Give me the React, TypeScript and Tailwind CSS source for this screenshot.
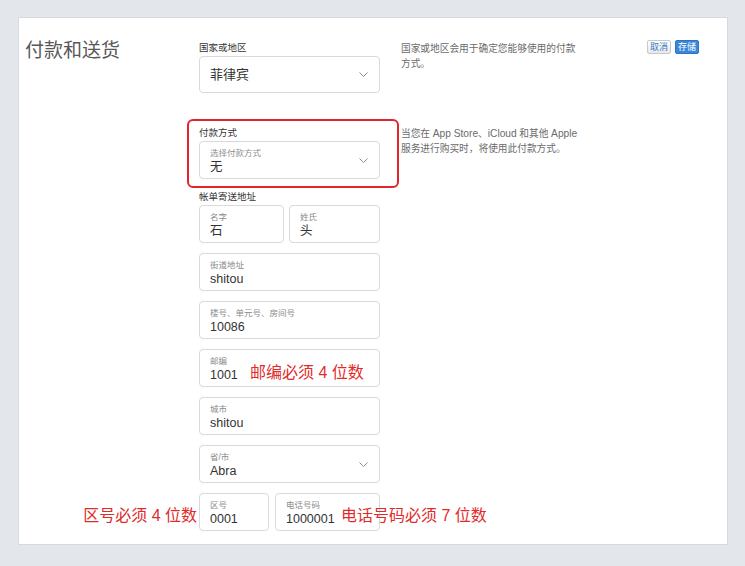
import React from "react";

function Chevron() {
  return (
    <svg width="9" height="5" viewBox="0 0 9 5" className="shrink-0">
      <polyline points="0.5,0.5 4.5,4.5 8.5,0.5" fill="none" stroke="#8a8a8a" strokeWidth="1" />
    </svg>
  );
}

function Field({
  label,
  value,
  className = "",
  select = false,
  children,
}: {
  label: string;
  value: string;
  className?: string;
  select?: boolean;
  children?: React.ReactNode;
}) {
  return (
    <div
      className={`relative h-[38px] rounded-[4px] border border-[#d9d9d9] bg-white pl-[10px] pr-[11px] pt-[6px] flex items-start ${className}`}
    >
      <div className="flex-1 min-w-0">
        <div className="text-[8.5px] leading-[10px] text-[#8c8c8c] whitespace-nowrap">{label}</div>
        <div className="mt-[2px] text-[12.5px] leading-[15px] text-[#333] whitespace-nowrap">{value}</div>
      </div>
      {select && (
        <div className="self-center -mt-[6px]">
          <Chevron />
        </div>
      )}
      {children}
    </div>
  );
}

export default function App() {
  return (
    <div className="h-[566px] w-full bg-[#e3e7eb] pt-[17px] pl-[18px] font-['Liberation_Sans','Noto_Sans_CJK_SC',sans-serif]">
      <div className="relative flex h-[528px] w-[710px] border border-[#d6dade] bg-white">
        {/* Title column */}
        <div className="w-[180px] shrink-0 pl-[6px] pt-[20px]">
          <h1 className="text-[19px] leading-[26px] text-[#585858] whitespace-nowrap">付款和送货</h1>
        </div>

        {/* Main column */}
        <div className="flex flex-col pt-[23px]">
          {/* Country */}
          <div className="flex">
            <div className="w-[181px] shrink-0">
              <div className="text-[9.5px] leading-[14px] text-[#333]">国家或地区</div>
              <div className="mt-[1px] flex h-[37px] items-center rounded-[4px] border border-[#d9d9d9] pl-[10px] pr-[11px]">
                <span className="flex-1 text-[13px] text-[#333]">菲律宾</span>
                <Chevron />
              </div>
            </div>
            <div className="ml-[21px] text-[9.7px] leading-[15px] text-[#6b6b6b] whitespace-nowrap">
              国家或地区会用于确定您能够使用的付款
              <br />
              方式。
            </div>
          </div>

          {/* Payment */}
          <div className="relative mt-[33px] flex">
            <div className="w-[181px] shrink-0">
              <div className="text-[9.5px] leading-[14px] text-[#333]">付款方式</div>
              <Field className="mt-[1px]" label="选择付款方式" value="无" select />
            </div>
            <div className="ml-[21px] text-[9.7px] leading-[15px] text-[#6b6b6b] whitespace-nowrap">
              当您在 <span className="text-[10.2px]">App Store</span>、<span className="text-[10.2px]">iCloud</span> 和其他 <span className="text-[10.2px]">Apple</span>
              <br />
              服务进行购买时，将使用此付款方式。
            </div>
            <div className="pointer-events-none absolute left-[-12px] top-[-7px] h-[69px] w-[212px] rounded-[6px] border-2 border-[#e0262c]" />
          </div>

          {/* Billing address */}
          <div className="mt-[11px] w-[181px]">
            <div className="text-[9.5px] leading-[14px] text-[#333]">帐单寄送地址</div>
            <div className="mt-[1px] flex flex-col gap-[10px]">
              <div className="flex gap-[5px]">
                <Field className="w-[85px] shrink-0" label="名字" value="石" />
                <Field className="flex-1" label="姓氏" value="头" />
              </div>
              <Field label="街道地址" value="shitou" />
              <Field label="楼号、单元号、房间号" value="10086" />
              <Field label="邮编" value="1001">
                <span className="absolute left-[50px] top-[15px] text-[16px] leading-[16px] text-[#e12b2b] whitespace-nowrap">
                  邮编必须 4 位数
                </span>
              </Field>
              <Field label="城市" value="shitou" />
              <Field label="省/市" value="Abra" select />
              <div className="flex gap-[6px]">
                <Field className="w-[70px] shrink-0" label="区号" value="0001">
                  <span className="absolute right-full mr-[3px] top-[14px] text-[16px] leading-[16px] text-[#e12b2b] whitespace-nowrap">
                    区号必须 4 位数
                  </span>
                </Field>
                <Field className="flex-1" label="电话号码" value="1000001">
                  <span className="absolute left-[65px] top-[14px] text-[16px] leading-[16px] text-[#e12b2b] whitespace-nowrap">
                    电话号码必须 7 位数
                  </span>
                </Field>
              </div>
            </div>
          </div>
        </div>

        {/* Buttons */}
        <div className="ml-auto mr-[28px] flex gap-[4px] pt-[22px]">
          <button className="h-[14px] rounded-[2px] border border-[#c9c9c9] bg-gradient-to-b from-white to-[#e8e8e8] px-[2px] text-[9px] leading-[12px] text-[#3a7bc8]">
            取消
          </button>
          <button className="h-[14px] rounded-[2px] border border-[#2f74c4] bg-[#3d87d8] px-[2px] text-[9px] leading-[12px] text-white">
            存储
          </button>
        </div>
      </div>
    </div>
  );
}
